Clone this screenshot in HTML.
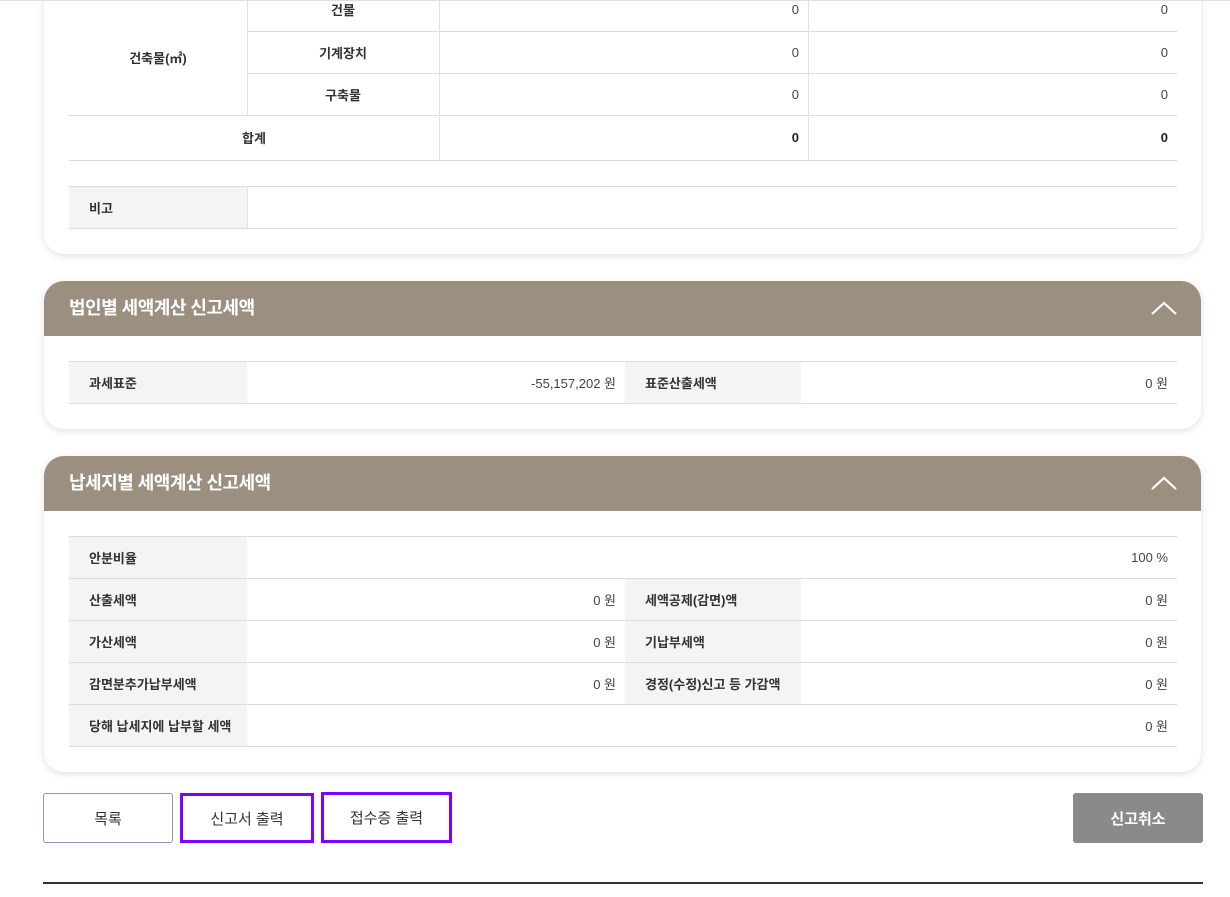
<!DOCTYPE html>
<html><head><meta charset="utf-8"><style>
*{margin:0;padding:0;box-sizing:border-box}
body{width:1230px;height:897px;background:#fff;font-family:"Liberation Sans","Noto Sans CJK KR",sans-serif;font-size:13px;color:#222;position:relative;overflow:hidden}
.card{position:absolute;left:44px;width:1157px;background:#fff;border-radius:20px;box-shadow:0 2px 8px rgba(0,0,0,.12)}
.hd{height:55px;background:#9b9080;border-radius:20px 20px 0 0;color:#fff;font-size:18px;font-weight:bold;padding-left:25px;line-height:54px;position:relative;letter-spacing:-0.5px}
.hd svg{position:absolute;right:24px;top:20px}
.a{position:absolute;}
.c{position:absolute;display:flex;align-items:center;font-size:13px}
.lb{background:#f4f4f4;padding-left:20px;font-weight:bold;color:#333}
.r{justify-content:flex-end;padding-right:9px;color:#444}
.ctr{justify-content:center;color:#333}
.hl{position:absolute;height:1px;background:#ddd}
.vl{position:absolute;width:1px;background:#e2e2e2}
.btn{position:absolute;top:793px;height:50px;display:flex;align-items:center;justify-content:center;font-size:15px;color:#333;background:#fff}
</style></head><body>
<div class="card" style="top:-20px;height:274px"></div>
<div class="card" style="top:281px;height:148px"><div class="hd">법인별 세액계산 신고세액<svg width="26" height="14" viewBox="0 0 26 14"><path d="M1 13L13 2L25 13" stroke="#fff" stroke-width="2.2" fill="none"/></svg></div></div>
<div class="card" style="top:456px;height:316px"><div class="hd">납세지별 세액계산 신고세액<svg width="26" height="14" viewBox="0 0 26 14"><path d="M1 13L13 2L25 13" stroke="#fff" stroke-width="2.2" fill="none"/></svg></div></div>

<!-- top table -->
<div class="hl" style="left:0;top:0;width:1230px;background:#e0e0e0"></div>
<div class="c ctr" style="left:69px;top:0;width:178px;height:115px;font-weight:bold">건축물(㎡)</div>
<div class="c ctr" style="left:247px;top:0;width:192px;height:18px;font-weight:bold">건물</div>
<div class="c ctr" style="left:247px;top:31px;width:192px;height:42px;font-weight:bold">기계장치</div>
<div class="c ctr" style="left:247px;top:73px;width:192px;height:42px;font-weight:bold">구축물</div>
<div class="c r" style="left:439px;top:0;width:369px;height:18px">0</div>
<div class="c r" style="left:808px;top:0;width:369px;height:18px">0</div>
<div class="c r" style="left:439px;top:31px;width:369px;height:42px">0</div>
<div class="c r" style="left:808px;top:31px;width:369px;height:42px">0</div>
<div class="c r" style="left:439px;top:73px;width:369px;height:42px">0</div>
<div class="c r" style="left:808px;top:73px;width:369px;height:42px">0</div>
<div class="c ctr" style="left:69px;top:115px;width:370px;height:45px;font-weight:bold">합계</div>
<div class="c r" style="left:439px;top:115px;width:369px;height:45px;font-weight:bold;color:#222">0</div>
<div class="c r" style="left:808px;top:115px;width:369px;height:45px;font-weight:bold;color:#222">0</div>
<div class="hl" style="left:247px;top:31px;width:930px"></div>
<div class="hl" style="left:247px;top:73px;width:930px"></div>
<div class="hl" style="left:69px;top:115px;width:1108px"></div>
<div class="hl" style="left:69px;top:160px;width:1108px"></div>
<div class="vl" style="left:247px;top:0;height:115px"></div>
<div class="vl" style="left:439px;top:0;height:160px"></div>
<div class="vl" style="left:808px;top:0;height:160px"></div>
<div class="c lb" style="left:69px;top:187px;width:178px;height:41px">비고</div>
<div class="hl" style="left:69px;top:186px;width:1108px"></div>
<div class="hl" style="left:69px;top:228px;width:1108px"></div>
<div class="vl" style="left:247px;top:186px;height:42px"></div>

<!-- card2 table -->
<div class="hl" style="left:69px;top:361px;width:1108px"></div>
<div class="hl" style="left:69px;top:403px;width:1108px"></div>
<div class="c lb" style="left:69px;top:362px;width:178px;height:41px">과세표준</div>
<div class="c r" style="left:247px;top:362px;width:378px;height:41px">-55,157,202 원</div>
<div class="c lb" style="left:625px;top:362px;width:176px;height:41px">표준산출세액</div>
<div class="c r" style="left:801px;top:362px;width:376px;height:41px">0 원</div>

<!-- card3 table -->
<div class="hl" style="left:69px;top:536px;width:1108px"></div>
<div class="c lb" style="left:69px;top:537px;width:178px;height:41px">안분비율</div>
<div class="c r" style="left:247px;top:537px;width:930px;height:41px">100 %</div>
<div class="hl" style="left:69px;top:578px;width:1108px"></div>
<div class="c lb" style="left:69px;top:579px;width:178px;height:41px">산출세액</div>
<div class="c r" style="left:247px;top:579px;width:378px;height:41px">0 원</div>
<div class="c lb" style="left:625px;top:579px;width:176px;height:41px">세액공제(감면)액</div>
<div class="c r" style="left:801px;top:579px;width:376px;height:41px">0 원</div>
<div class="hl" style="left:69px;top:620px;width:1108px"></div>
<div class="c lb" style="left:69px;top:621px;width:178px;height:41px">가산세액</div>
<div class="c r" style="left:247px;top:621px;width:378px;height:41px">0 원</div>
<div class="c lb" style="left:625px;top:621px;width:176px;height:41px">기납부세액</div>
<div class="c r" style="left:801px;top:621px;width:376px;height:41px">0 원</div>
<div class="hl" style="left:69px;top:662px;width:1108px"></div>
<div class="c lb" style="left:69px;top:663px;width:178px;height:41px">감면분추가납부세액</div>
<div class="c r" style="left:247px;top:663px;width:378px;height:41px">0 원</div>
<div class="c lb" style="left:625px;top:663px;width:176px;height:41px">경정(수정)신고 등 가감액</div>
<div class="c r" style="left:801px;top:663px;width:376px;height:41px">0 원</div>
<div class="hl" style="left:69px;top:704px;width:1108px"></div>
<div class="c lb" style="left:69px;top:705px;width:178px;height:41px">당해 납세지에 납부할 세액</div>
<div class="c r" style="left:247px;top:705px;width:930px;height:41px">0 원</div>
<div class="hl" style="left:69px;top:746px;width:1108px"></div>

<div class="btn" style="left:43px;width:130px;border:1px solid #8d97b5;border-radius:3px">목록</div>
<div class="btn" style="left:180px;width:134px;border:3px solid #8000ff">신고서 출력</div>
<div class="btn" style="left:321px;width:131px;border:3px solid #8000ff;top:792px;height:51px">접수증 출력</div>
<div class="btn" style="left:1073px;width:130px;background:#8a8a8a;color:#fff;font-weight:bold;border-radius:3px">신고취소</div>
<div class="a" style="left:43px;top:882px;width:1160px;height:2px;background:#333"></div>
</body></html>
